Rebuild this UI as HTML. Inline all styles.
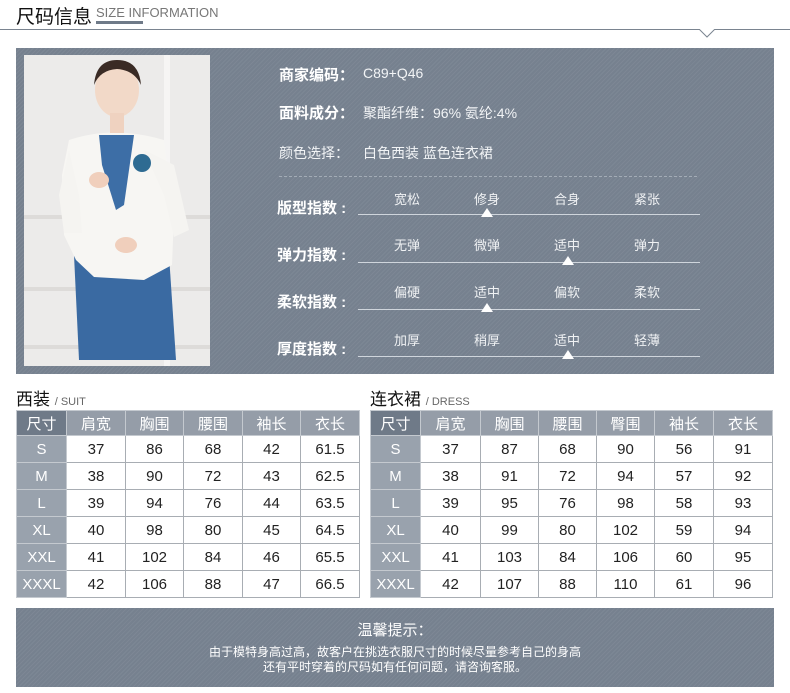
<!DOCTYPE html>
<html><head><meta charset="utf-8"><style>
*{margin:0;padding:0;box-sizing:border-box}
body{width:790px;height:693px;background:#fff;position:relative;overflow:hidden;font-family:"Liberation Sans","Noto Sans CJK SC",sans-serif}
.a{position:absolute;white-space:nowrap}
.panel{background:#76818f;background-image:repeating-linear-gradient(135deg,rgba(255,255,255,.05) 0 1px,transparent 1px 3px)}
.w{color:#fff}
.lab{font-size:15px;color:#fff;font-weight:bold}
.val{font-size:14px;color:#f2f4f6}
.opt{font-size:13px;color:#f0f2f4;width:60px;text-align:center}
.ln{height:1px;background:#cfd5dc}
.tri{width:0;height:0;border-left:6px solid transparent;border-right:6px solid transparent;border-bottom:9px solid #fff}
table{position:absolute;border-collapse:collapse;table-layout:fixed}
td{border:1px solid #a8adb3;text-align:center;font-size:15px;color:#222;height:27px;padding:0}
tr.h td{height:25px;background:#959da8;color:#fff;border-color:#c4c9cf}
tr.h td:first-child{background:#6f7a88}
td.s{background:#99a2ad;color:#fff;border-color:#c4c9cf}
</style></head><body>
<div class="a" style="left:16px;top:2px;font-size:19px;color:#111">尺码信息</div>
<div class="a" style="left:96px;top:5px;font-size:13px;color:#777">SIZE INFORMATION</div>
<div class="a" style="left:96px;top:21px;width:47px;height:3px;background:#6f7a88"></div>
<div class="a" style="left:0;top:29px;width:790px;height:1px;background:#7a8490"></div>
<svg class="a" style="left:698px;top:29px" width="20" height="10"><path d="M1 0 L9 8 L17 0" fill="#fff" stroke="#7a8490" stroke-width="1"/></svg>

<div class="a panel" style="left:16px;top:48px;width:758px;height:326px"></div>
<svg class="a" style="left:24px;top:55px" width="186" height="311" viewBox="0 0 186 311">
<rect width="186" height="311" fill="#ecebea"/>
<rect x="140" y="0" width="6" height="311" fill="#f6f5f4"/>
<rect x="0" y="160" width="186" height="4" fill="#dddbd9"/>
<rect x="0" y="232" width="186" height="4" fill="#dddbd9"/>
<rect x="0" y="290" width="186" height="4" fill="#dddbd9"/>
<path d="M50 200 L145 200 L152 305 L55 305 Z" fill="#3a6aa2"/>
<path d="M45 85 Q90 70 140 85 L150 160 L148 210 L120 225 L70 222 L52 205 L40 180 L38 120 Z" fill="#f7f6f3"/>
<path d="M75 80 L110 80 L100 150 L92 155 L78 110 Z" fill="#3d6ea6"/>
<path d="M120 95 L150 110 L165 175 L150 182 L140 140 Z" fill="#f5f4f1"/>
<path d="M45 95 L35 140 L40 178 L58 178 L55 140 Z" fill="#f5f4f1"/>
<circle cx="118" cy="108" r="9" fill="#2e6b92"/>
<ellipse cx="93" cy="35" rx="22" ry="27" fill="#f2d9c8"/>
<path d="M70 30 Q72 5 93 5 Q115 5 117 30 Q110 15 93 14 Q76 15 70 30 Z" fill="#3a2b25"/>
<rect x="86" y="58" width="14" height="20" fill="#efd2c0"/>
<ellipse cx="75" cy="125" rx="10" ry="8" fill="#f0cfbc"/>
<ellipse cx="102" cy="190" rx="11" ry="8" fill="#f0cfbc"/>
</svg>

<div class="a lab" style="left:279px;top:64px">商家编码：</div><div class="a val" style="left:363px;top:65px">C89+Q46</div>
<div class="a lab" style="left:279px;top:102px">面料成分：</div><div class="a val" style="left:363px;top:103px">聚酯纤维：96% 氨纶:4%</div>
<div class="a val" style="left:279px;top:143px">颜色选择：</div><div class="a val" style="left:363px;top:143px">白色西装 蓝色连衣裙</div>
<div class="a" style="left:279px;top:176px;width:418px;border-top:1px dashed #a3acb6"></div>

<div class="a lab" style="left:277px;top:197px">版型指数 :</div>
<div class="a opt" style="left:377px;top:189px">宽松</div><div class="a opt" style="left:457px;top:189px">修身</div><div class="a opt" style="left:537px;top:189px">合身</div><div class="a opt" style="left:617px;top:189px">紧张</div>
<div class="a ln" style="left:358px;top:214px;width:342px"></div><div class="a tri" style="left:481px;top:208px"></div>

<div class="a lab" style="left:277px;top:244px">弹力指数 :</div>
<div class="a opt" style="left:377px;top:235px">无弹</div><div class="a opt" style="left:457px;top:235px">微弹</div><div class="a opt" style="left:537px;top:235px">适中</div><div class="a opt" style="left:617px;top:235px">弹力</div>
<div class="a ln" style="left:358px;top:262px;width:342px"></div><div class="a tri" style="left:562px;top:256px"></div>

<div class="a lab" style="left:277px;top:291px">柔软指数 :</div>
<div class="a opt" style="left:377px;top:282px">偏硬</div><div class="a opt" style="left:457px;top:282px">适中</div><div class="a opt" style="left:537px;top:282px">偏软</div><div class="a opt" style="left:617px;top:282px">柔软</div>
<div class="a ln" style="left:358px;top:309px;width:342px"></div><div class="a tri" style="left:481px;top:303px"></div>

<div class="a lab" style="left:277px;top:338px">厚度指数 :</div>
<div class="a opt" style="left:377px;top:330px">加厚</div><div class="a opt" style="left:457px;top:330px">稍厚</div><div class="a opt" style="left:537px;top:330px">适中</div><div class="a opt" style="left:617px;top:330px">轻薄</div>
<div class="a ln" style="left:358px;top:356px;width:342px"></div><div class="a tri" style="left:562px;top:350px"></div>

<div class="a" style="left:16px;top:385px;font-size:17px;color:#111">西装 <span style="font-size:11px;color:#666">/ SUIT</span></div>
<div class="a" style="left:370px;top:385px;font-size:17px;color:#111">连衣裙 <span style="font-size:11px;color:#666">/ DRESS</span></div>

<table style="left:16px;top:410px;width:343px">
<colgroup><col style="width:50px"><col style="width:59px"><col style="width:58px"><col style="width:59px"><col style="width:58px"><col style="width:59px"></colgroup>
<tr class="h"><td>尺寸</td><td>肩宽</td><td>胸围</td><td>腰围</td><td>袖长</td><td>衣长</td></tr>
<tr><td class="s">S</td><td>37</td><td>86</td><td>68</td><td>42</td><td>61.5</td></tr>
<tr><td class="s">M</td><td>38</td><td>90</td><td>72</td><td>43</td><td>62.5</td></tr>
<tr><td class="s">L</td><td>39</td><td>94</td><td>76</td><td>44</td><td>63.5</td></tr>
<tr><td class="s">XL</td><td>40</td><td>98</td><td>80</td><td>45</td><td>64.5</td></tr>
<tr><td class="s">XXL</td><td>41</td><td>102</td><td>84</td><td>46</td><td>65.5</td></tr>
<tr><td class="s">XXXL</td><td>42</td><td>106</td><td>88</td><td>47</td><td>66.5</td></tr>
</table>

<table style="left:370px;top:410px;width:402px">
<colgroup><col style="width:50px"><col style="width:60px"><col style="width:58px"><col style="width:58px"><col style="width:58px"><col style="width:59px"><col style="width:59px"></colgroup>
<tr class="h"><td>尺寸</td><td>肩宽</td><td>胸围</td><td>腰围</td><td>臀围</td><td>袖长</td><td>衣长</td></tr>
<tr><td class="s">S</td><td>37</td><td>87</td><td>68</td><td>90</td><td>56</td><td>91</td></tr>
<tr><td class="s">M</td><td>38</td><td>91</td><td>72</td><td>94</td><td>57</td><td>92</td></tr>
<tr><td class="s">L</td><td>39</td><td>95</td><td>76</td><td>98</td><td>58</td><td>93</td></tr>
<tr><td class="s">XL</td><td>40</td><td>99</td><td>80</td><td>102</td><td>59</td><td>94</td></tr>
<tr><td class="s">XXL</td><td>41</td><td>103</td><td>84</td><td>106</td><td>60</td><td>95</td></tr>
<tr><td class="s">XXXL</td><td>42</td><td>107</td><td>88</td><td>110</td><td>61</td><td>96</td></tr>
</table>

<div class="a panel" style="left:16px;top:608px;width:758px;height:79px"></div>
<div class="a w" style="left:16px;top:619px;width:758px;text-align:center;font-size:15px">温馨提示：</div>
<div class="a w" style="left:16px;top:645px;width:758px;text-align:center;font-size:12px;line-height:15px">由于模特身高过高，故客户在挑选衣服尺寸的时候尽量参考自己的身高<br>还有平时穿着的尺码如有任何问题，请咨询客服。</div>
</body></html>
